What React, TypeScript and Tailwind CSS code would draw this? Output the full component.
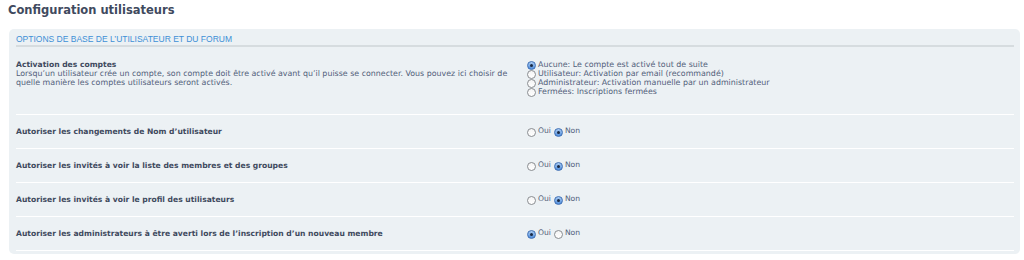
const rows = [
  { label: "Autoriser les changements de Nom d\u2019utilisateur", yes: false },
  { label: "Autoriser les invit\u00e9s \u00e0 voir la liste des membres et des groupes", yes: false },
  { label: "Autoriser les invit\u00e9s \u00e0 voir le profil des utilisateurs", yes: false },
  { label: "Autoriser les administrateurs \u00e0 \u00eatre averti lors de l\u2019inscription d\u2019un nouveau membre", yes: true },
];

const activation = [
  "Aucune: Le compte est activ\u00e9 tout de suite",
  "Utilisateur: Activation par email (recommand\u00e9)",
  "Administrateur: Activation manuelle par un administrateur",
  "Ferm\u00e9es: Inscriptions ferm\u00e9es",
];

function Radio({ checked }: { checked: boolean }) {
  if (checked) {
    return (
      <span className="mt-[1px] flex h-[9px] w-[9px] shrink-0 items-center justify-center rounded-full border border-[#3f6fb4] bg-gradient-to-b from-[#a9cbf2] to-[#4f8ddb]">
        <span className="h-[3px] w-[3px] rounded-full bg-[#1b2a44]" />
      </span>
    );
  }
  return (
    <span className="mt-[1px] h-[9px] w-[9px] shrink-0 rounded-full border border-[#8a8d91] bg-gradient-to-b from-[#f4f4f4] to-[#ffffff]" />
  );
}

export default function App() {
  return (
    <div className="min-h-[260px] bg-white pt-[3px] font-['DejaVu_Sans',sans-serif]">
      <h1 className="ml-[8px] text-[11.5px] font-bold leading-[14px] text-[#3f4a5e]">
        Configuration utilisateurs
      </h1>
      <div className="ml-[9px] mr-[4px] mt-[12px] rounded-[5px] bg-[#ecf1f4] px-[7px] pb-[3px] pr-[6px]">
        <div className="flex h-[18px] items-end border-b-2 border-[#d6dcdf] pb-[1px] font-['Liberation_Sans',sans-serif] text-[8.5px] leading-[10px] text-[#3d8fd6]">
          OPTIONS DE BASE DE L&rsquo;UTILISATEUR ET DU FORUM
        </div>
        <div className="flex h-[68px] border-b border-white pt-[13px] text-[7.9px] leading-[9px] text-[#52607a]">
          <div className="w-[510px]">
            <div className="text-[7.6px] font-bold text-[#3f4a5e]">Activation des comptes</div>
            <div>
              Lorsqu&rsquo;un utilisateur cr&eacute;e un compte, son compte doit &ecirc;tre activ&eacute; avant qu&rsquo;il puisse se connecter. Vous pouvez ici choisir de quelle mani&egrave;re les comptes utilisateurs seront activ&eacute;s.
            </div>
          </div>
          <div className="ml-[1px] flex flex-col">
            {activation.map((a, i) => (
              <div key={a} className="flex h-[9px] items-start gap-[2px]">
                <Radio checked={i === 0} />
                <span>{a}</span>
              </div>
            ))}
          </div>
        </div>
        {rows.map((r) => (
          <div
            key={r.label}
            className="flex h-[34px] items-center border-b border-white text-[7.6px] leading-[9px] text-[#52607a]"
          >
            <div className="w-[510px] font-bold text-[#3f4a5e]">{r.label}</div>
            <div className="ml-[1px] flex items-start gap-[3px]">
              <div className="flex items-start gap-[2px]">
                <Radio checked={r.yes} />
                <span className="-mt-[1px]">Oui</span>
              </div>
              <div className="flex items-start gap-[2px]">
                <Radio checked={!r.yes} />
                <span className="-mt-[1px]">Non</span>
              </div>
            </div>
          </div>
        ))}
      </div>
    </div>
  );
}
